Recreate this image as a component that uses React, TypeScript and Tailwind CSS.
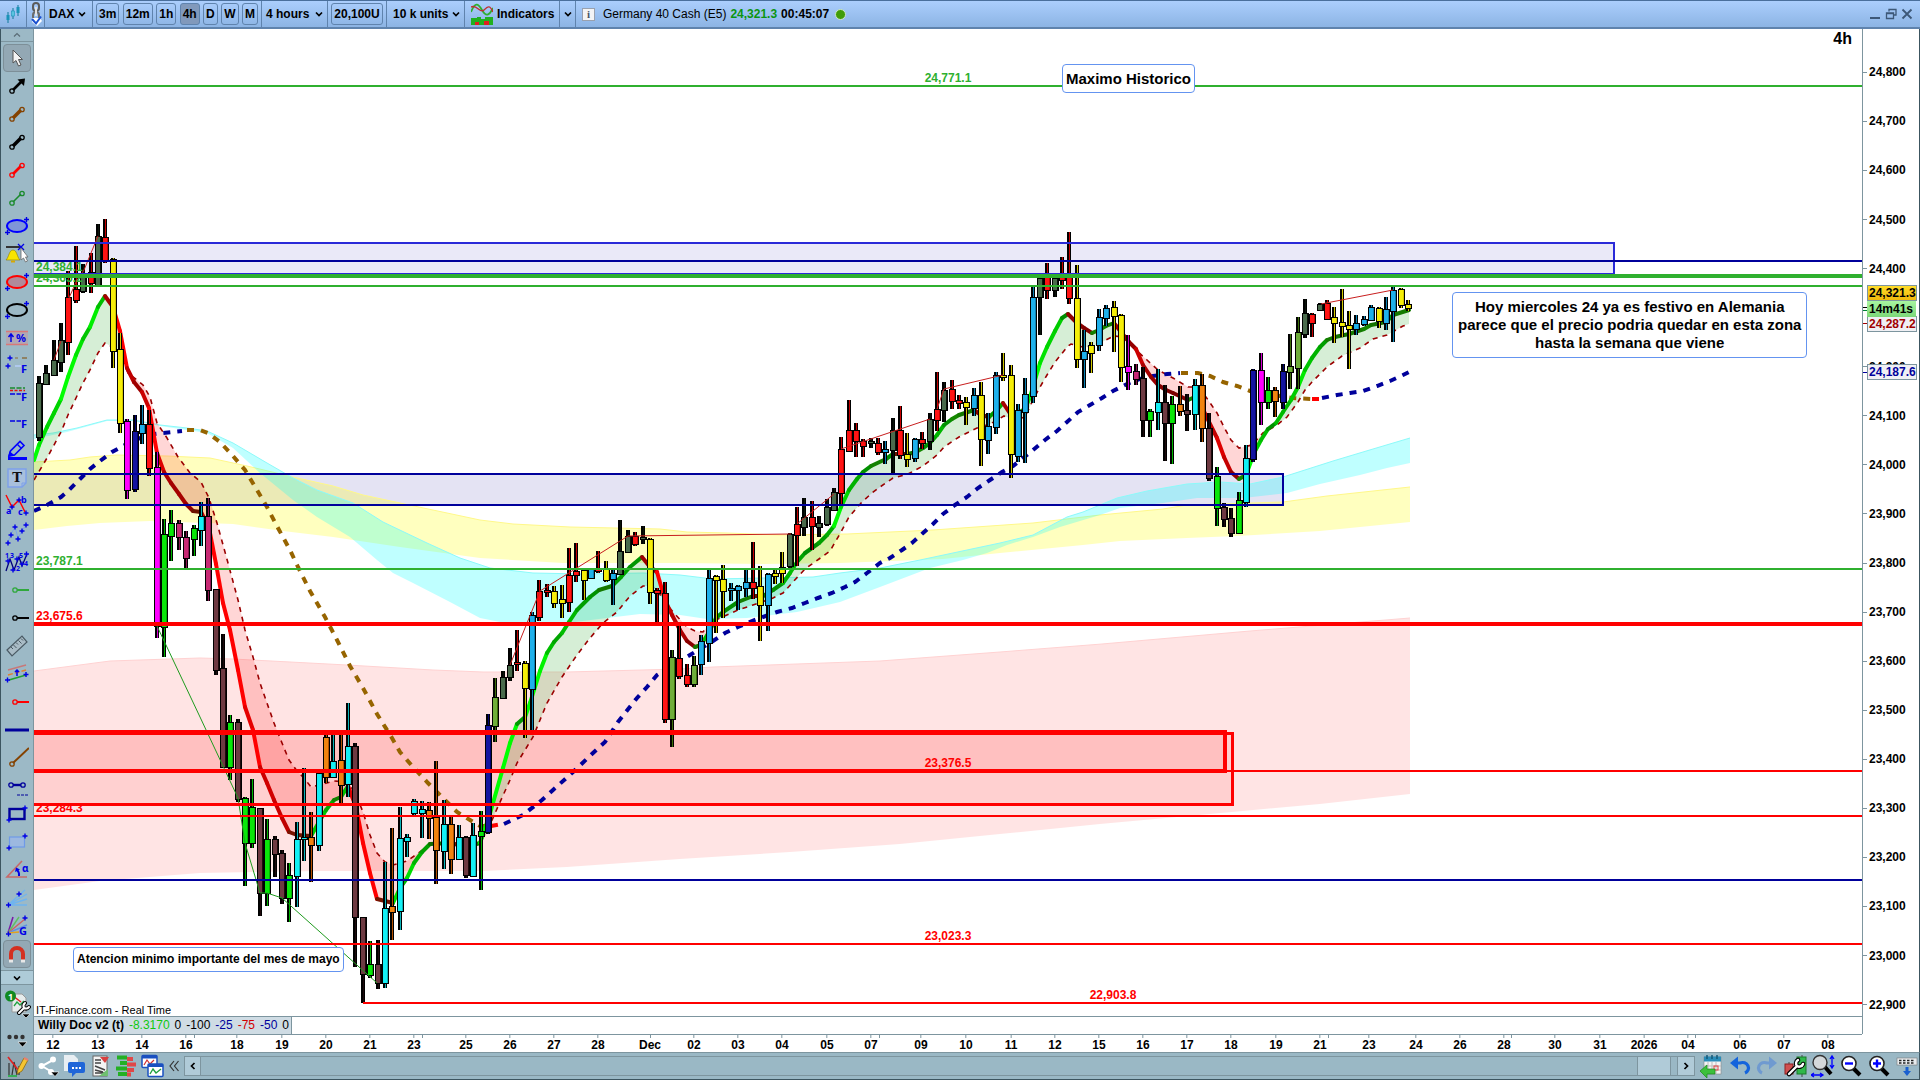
import React from "react";

type Pt = [number, number];

/* ---------- plot coordinate space ---------- */
const X0 = 34;
const Y0 = 29;
const PW = 1828;
const PH = 987;
const VIEW = "34 29 1828 987";
const px = (x: number) => `${((x - X0) / PW) * 100}%`;
const py = (y: number) => `${((y - Y0) / PH) * 100}%`;

/* ---------- candles: high, body top, body bottom, low, colour key ---------- */
const CANDLES =
  "376,383,437,441,g 365,373,384,384,g 340,360,375,376,g 323,340,362,372,g 271,297,342,355,r 246,289,300,303,r 264,274,291,293,g 253,272,283,293,r 224,236,285,285,g 219,237,260,263,r " +
  "258,259,351,368,y 333,349,423,433,y 419,421,490,499,m 415,431,489,492,n 405,424,433,444,b 410,424,468,476,r 452,467,626,638,m 519,534,627,657,l 510,523,536,561,l 520,523,537,550,k " +
  "531,537,558,568,k 525,528,539,556,l 502,516,530,546,c 498,516,590,601,k 589,589,670,675,w 634,668,767,768,w 715,722,767,780,l 719,722,799,802,w 797,798,843,886,l 779,807,843,848,l " +
  "808,808,893,916,w 819,839,893,906,l 836,839,854,877,w 850,853,898,904,w 863,875,898,922,l 822,839,876,907,c 768,837,839,861,c 812,837,845,882,o 773,773,845,851,c 735,737,777,783,o " +
  "735,761,777,778,c 735,760,785,803,o 703,746,784,797,c 743,746,917,967,w 917,917,974,1003,w 941,964,975,978,l 940,964,983,989,w 862,908,983,988,c 828,906,912,940,o 807,838,911,930,c " +
  "834,837,841,857,c 799,801,813,815,c 801,809,813,838,c 802,810,818,839,o 761,817,850,884,o 800,824,851,869,c 817,824,859,874,o 825,837,859,859,c 836,837,875,878,w 823,835,876,876,c " +
  "811,831,836,890,l 714,725,832,834,n 678,697,726,742,v 671,677,698,698,g 648,665,677,681,g 630,662,664,671,r 661,663,688,738,y 612,615,689,735,b 580,591,617,621,r 584,590,592,597,r " +
  "586,591,603,608,y 585,599,603,618,y 548,575,602,612,r 543,571,575,582,r 569,570,580,600,y 568,569,578,579,b 551,568,571,573,r 561,569,580,582,y 570,573,579,605,b 520,551,574,575,g " +
  "530,536,552,553,g 532,536,544,546,r 526,537,539,544,g 538,539,592,604,y 588,590,593,623,r 582,593,719,723,r 650,657,719,747,v 625,658,676,679,r 664,675,684,687,r 656,665,684,687,v " +
  "635,641,664,675,b 569,578,643,662,b 575,576,580,633,y 565,579,591,618,y 583,588,590,601,b 585,586,590,610,b 569,582,588,597,b 542,582,588,599,r 566,586,605,641,y 573,574,605,631,b " +
  "569,573,576,584,y 552,567,573,583,y 533,534,566,568,g 507,524,535,566,r 498,517,527,536,g 501,517,526,550,r 516,523,527,537,g 499,507,524,526,g 488,492,510,510,g 437,449,493,504,r " +
  "400,430,451,452,r 423,430,441,457,r 439,441,446,457,r 438,441,443,448,g 438,443,452,455,r 441,449,452,464,b 418,430,450,473,g 406,430,455,459,r 433,454,459,467,y 438,439,458,462,b " +
  "432,439,443,449,r 413,419,441,450,g 372,409,420,431,r 382,390,410,422,g 380,389,401,409,r 395,400,403,409,r 397,402,407,425,y 388,395,408,416,b 382,395,439,466,y 413,426,440,454,b " +
  "372,375,427,434,b 353,375,377,381,y 365,375,454,478,y 404,410,456,462,b 378,394,412,463,b 287,297,396,403,b 277,278,297,335,g 263,277,290,299,r 277,278,290,297,g 257,277,280,289,r " +
  "232,277,298,304,r 265,298,359,368,y 330,351,359,388,b 342,345,353,373,y 309,317,345,351,b 305,308,318,326,b 301,307,316,352,y 314,315,367,382,y 335,366,372,390,m 364,371,379,385,k " +
  "367,378,420,437,w 409,411,420,437,l 369,402,412,430,c 385,402,423,461,w 396,404,423,464,l 386,404,411,416,o 394,410,414,431,w 379,385,414,430,c 374,385,428,442,o 413,428,478,481,w " +
  "467,476,508,526,l 503,507,519,527,w 508,518,533,537,w 492,500,533,534,l 445,458,502,507,c 369,370,459,462,n 353,370,402,425,m 377,390,402,409,l 387,390,401,417,o 364,371,402,409,n " +
  "334,366,372,389,v 317,332,368,389,v 299,313,334,338,g 313,314,323,337,r 303,304,310,311,g 300,303,319,320,r 307,317,323,343,y 289,322,326,337,y 311,325,329,369,y 315,323,329,335,b " +
  "316,319,324,326,b 305,307,320,321,b 307,308,321,328,y 297,309,323,330,b 287,290,311,342,b 288,289,305,308,y 300,304,308,311,y";

const BODY: Record<string, string> = {
  g: "#4a6b4c", r: "#ff1414", y: "#f5ee0a", m: "#ff00ff", n: "#1414a0", b: "#1fb0ea", l: "#0ae60a",
  k: "#c82a74", c: "#14f0f5", w: "#6e3a42", o: "#f08410", v: "#6fae3a",
};
const WICK: Record<string, string> = {
  g: "#0a140a", r: "#c80000", y: "#d2c800", m: "#d200d2", n: "#00006e", b: "#0a82b4", l: "#00b400",
  k: "#8c1450", c: "#0ab4b9", w: "#1e0a0c", o: "#b45000", v: "#3c6e0a",
};

/* ---------- averages and bands ---------- */
const pts = (s: string): Pt[] => s.trim().split(/\s+/).map((p) => p.split(",").map(Number) as Pt);

const FAST = pts(
  "34,460 39,445 47,427 54,413 61,399 68,377 76,355 83,339 90,327 98,307 105,296 113,307 120,331 127,368 134,382 142,392 149,408 157,453 164,472 171,483 179,494 186,504 193,511 201,512 209,528 216,564 223,603 230,630 238,670 245,707 253,730 260,767 267,783 274,800 282,818 289,832 297,835 311,836 319,822 326,810 334,800 341,797 348,786 356,807 363,843 370,873 377,899 393,903 400,888 407,878 414,863 422,852 430,844 451,843 466,847 480,843 489,817 503,768 510,743 517,724 525,717 530,703 540,671 547,653 554,642 562,633 569,622 577,610 590,597 599,590 612,586 621,577 630,567 642,557 650,567 657,572 665,600 672,615 680,630 687,641 695,647 701,645 709,632 716,618 723,612 738,602 753,596 763,596 773,590 783,583 790,573 797,562 805,553 819,543 827,535 834,526 841,507 849,490 857,479 863,472 871,466 886,459 893,454 908,454 916,452 923,448 930,443 937,435 944,425 952,419 959,415 974,410 981,415 989,417 997,410 1003,403 1011,415 1018,413 1025,409 1030,397 1040,363 1047,347 1055,331 1062,318 1068,314 1077,323 1084,328 1092,333 1099,330 1106,326 1114,323 1121,332 1129,342 1136,349 1143,365 1151,377 1158,385 1166,390 1173,393 1188,400 1195,397 1202,407 1209,422 1217,438 1224,457 1231,472 1239,479 1246,475 1254,453 1261,440 1268,429 1276,423 1283,412 1291,400 1298,387 1305,370 1312,358 1320,347 1327,340 1335,337 1349,334 1364,329 1371,325 1386,322 1393,315 1409,310"
);
const SIGNAL = pts(
  "34,480 47,458 61,432 68,415 76,398 83,383 90,370 98,353 105,343 113,347 120,352 128,373 137,380 143,385 150,397 157,423 167,438 178,457 190,473 201,482 209,498 217,523 228,563 238,600 245,630 253,657 260,683 267,703 274,723 282,743 289,760 297,771 304,778 311,787 323,784 334,781 348,782 356,795 363,812 370,835 377,853 385,862 393,865 407,861 417,854 430,845 450,843 467,847 480,843 489,827 496,811 510,780 517,763 525,750 533,737 540,720 547,703 562,677 577,655 590,638 603,623 617,612 630,596 643,586 650,586 657,590 665,602 673,612 687,627 695,631 703,632 710,623 720,618 738,610 753,605 773,598 783,593 793,582 805,569 819,559 830,551 841,532 849,517 862,502 872,493 880,487 893,478 908,474 923,466 937,455 944,447 959,437 977,428 990,424 1004,416 1015,420 1025,417 1033,400 1040,387 1047,375 1055,362 1068,346 1071,344 1083,347 1093,346 1102,342 1114,336 1123,337 1136,350 1147,360 1158,370 1173,378 1188,387 1195,387 1206,397 1217,413 1224,427 1231,440 1239,448 1252,445 1263,433 1277,425 1287,417 1298,402 1305,390 1312,382 1327,367 1342,356 1360,348 1373,339 1387,335 1403,326 1409,324"
);
const SLOW: { color: string; p: Pt[] }[] = [
  { color: "#00009b", p: pts("34,511 47,505 61,497 68,491 80,479 90,469 100,461 112,452 123,446 138,439 147,435 163,433 182,431") },
  { color: "#966400", p: pts("187,430 200,430 208,433 220,442 233,456 245,470 257,490 267,507 278,528 290,550 298,567 310,591 325,617 337,640 350,666 363,688 377,714 392,738 400,752 413,767 428,783 443,798 457,812 470,820 480,826 488,826") },
  { color: "#ff0000", p: pts("491,826 502,824") },
  { color: "#00009b", p: pts("504,824 523,815 542,800 553,790 573,772 593,753 605,742 618,722 637,698 647,687 657,675 670,667 690,655 713,641 725,633 738,627 752,621 763,617 777,612 792,608 805,603 818,598 832,593 845,587 855,582 867,573 880,563 890,558 902,550 912,543 923,533 933,524 943,514 955,505 967,497 978,488 990,480 1002,472 1013,466 1023,458 1033,450 1045,440 1057,431 1067,422 1078,412 1090,405 1102,398 1113,391 1127,384 1140,379 1153,376 1167,374 1180,373") },
  { color: "#966400", p: pts("1181,373 1198,373 1210,376 1223,382 1237,386 1250,391 1267,394 1280,396 1292,398 1311,399") },
  { color: "#ff0000", p: pts("1312,399 1321,399") },
  { color: "#00009b", p: pts("1322,398 1337,395 1350,393 1363,391 1377,386 1390,381 1403,375 1409,372") },
];
const YELLOW_TOP = pts("34,462 70,460 90,457 117,455 167,456 210,458 247,466 293,477 333,486 363,495 400,503 480,520 513,524 570,527 660,529 687,532 727,533 780,535 847,534 933,530 1033,523 1100,515 1163,509 1187,505 1283,502 1327,496 1410,487");
const YELLOW_BOTTOM = pts("34,530 67,526 100,523 150,521 233,524 283,531 333,537 400,547 480,558 563,563 680,563 763,564 840,563 943,559 1000,553 1083,545 1120,541 1187,538 1237,536 1320,531 1410,522");
const CYAN_TOP = pts("34,435 53,433 77,428 107,420 133,420 160,425 187,428 207,431 233,443 267,463 293,478 317,490 353,503 383,522 427,543 460,558 490,568 533,573 583,574 643,573 680,575 713,579 763,578 813,577 840,573 880,568 920,560 967,550 1000,543 1033,535 1067,517 1083,512 1117,498 1147,491 1187,484 1220,482 1250,484 1283,477 1333,461 1373,449 1410,438");
const CYAN_BOTTOM = pts("34,439 67,432 107,421 133,421 160,426 207,433 233,448 260,473 293,500 317,517 350,537 377,560 393,573 413,583 450,602 480,618 500,622 567,623 607,618 640,614 680,615 707,619 747,618 797,612 840,602 880,587 930,568 963,560 987,553 1007,545 1033,537 1060,527 1100,515 1120,508 1163,503 1197,498 1243,498 1287,493 1320,484 1360,475 1387,468 1410,463");
const PINK_TOP = pts("34,671 110,661 200,658 233,659 347,665 433,670 483,672 567,672 680,669 713,667 880,661 1000,652 1102,644 1250,631 1410,618");
const PINK_BOTTOM = pts("34,890 100,881 200,873 320,871 483,871 567,867 680,859 790,852 900,844 1000,834 1100,824 1232,812 1320,804 1410,794");

const line = (p: Pt[]) => "M" + p.map((q) => q.join(",")).join("L");
const band = (a: Pt[], b: Pt[]) => line(a) + "L" + [...b].reverse().map((q) => q.join(",")).join("L") + "Z";

function yAt(p: Pt[], x: number) {
  for (let i = 1; i < p.length; i++) {
    if (x <= p[i][0]) {
      const [x1, y1] = p[i - 1];
      const [x2, y2] = p[i];
      return y1 + ((y2 - y1) * (x - x1)) / (x2 - x1);
    }
  }
  return p[p.length - 1][1];
}

function clouds() {
  const out: { up: boolean; a: Pt[]; b: Pt[] }[] = [];
  for (let x = 34; x <= 1409; x += 2.5) {
    const a = yAt(FAST, x);
    const b = yAt(SIGNAL, x);
    const up = a < b;
    let cur = out[out.length - 1];
    if (!cur || cur.up !== up) {
      cur = { up, a: [], b: [] };
      out.push(cur);
    }
    cur.a.push([x, a]);
    cur.b.push([x, b]);
  }
  return out.filter((c) => c.a.length > 1);
}

function slopeColor(s: number) {
  const k = Math.min(1, Math.abs(s) / (s < 0 ? 2.8 : 3.5));
  const v = Math.round(105 + 150 * k);
  if (s < 0) return `rgb(${Math.abs(s) < 0.6 ? 20 : 0},${v},0)`;
  return `rgb(${v},${Math.abs(s) < 0.4 ? 20 : 0},0)`;
}

const ZIGZAG_UP = [
  "54,360 61,341", "69,298 76,282 84,270 98,236", "510,665 540,591 628,536 791,534", "797,524 834,494",
  "841,449 930,419", "937,409 944,389 1003,375", "1321,304 1393,290",
];

function ChartBase() {
  return (
    <svg className="absolute inset-0 h-full w-full" viewBox={VIEW} preserveAspectRatio="none" aria-hidden="true">
      <rect x="33" y="243" width="1581" height="32" fill="#eae9f8" />
      <rect x="33" y="474" width="1250" height="31" fill="#e4e3f3" />
      <path d={band(PINK_TOP, PINK_BOTTOM)} fill="#ff0000" fillOpacity="0.105" />
      <path d={line(PINK_TOP)} stroke="#ffd2d2" fill="none" />
      <rect x="33" y="733" width="1199" height="72" fill="#ff0000" fillOpacity="0.085" />
      <rect x="33" y="733" width="1192" height="38" fill="#ff0000" fillOpacity="0.075" />
      <path d={band(YELLOW_TOP, YELLOW_BOTTOM)} fill="#ffff00" fillOpacity="0.25" />
      <path d={line(YELLOW_TOP)} stroke="#fff88a" fill="none" />
      <path d={band(CYAN_TOP, CYAN_BOTTOM)} fill="#00ffff" fillOpacity="0.25" />
      <path d={line(CYAN_TOP)} stroke="#8cfafa" fill="none" />
      {clouds().map((c, i) => (
        <path key={i} d={band(c.a, c.b)} fill={c.up ? "#32aa32" : "#ff3232"} fillOpacity="0.2" />
      ))}
      <path d={line(SIGNAL)} stroke="#9b0000" strokeWidth="1.6" strokeDasharray="5 5" fill="none" />
      {SLOW.map((s, i) => (
        <path key={i} d={line(s.p)} stroke={s.color} strokeWidth="4" strokeDasharray="7 7" fill="none" />
      ))}
      {FAST.slice(1).map((p, i) => {
        const q = FAST[i];
        return (
          <line key={i} x1={q[0]} y1={q[1]} x2={p[0]} y2={p[1]} stroke={slopeColor((p[1] - q[1]) / (p[0] - q[0]))} strokeWidth="4" strokeLinecap="round" />
        );
      })}
      <g shapeRendering="crispEdges">
        {CANDLES.split(" ").map((row, i) => {
          const f = row.split(",");
          const [h, t, b, l] = f.slice(0, 4).map(Number);
          const c = f[4];
          const x = Math.round(39 + i * 7.36);
          const bh = Math.max(3, b - t + 1);
          return (
            <g key={i}>
              <rect x={x - 2} y={h} width="4" height={l - h} fill="#000" />
              <rect x={x} y={h} width="1" height={l - h} fill={WICK[c]} />
              <rect x={x - 3} y={t} width="7" height={bh} fill="#000" />
              <rect x={x - 2} y={t + 1} width="5" height={bh - 2} fill={BODY[c]} />
              <rect x={x + 2} y={t + 1} width="1" height={bh - 2} fill={WICK[c]} />
            </g>
          );
        })}
      </g>
      {ZIGZAG_UP.map((z) => (
        <polyline key={z} points={z} stroke="#c81e1e" fill="none" />
      ))}
      <polyline points="157,626 200,717 238,798 245,843 260,893 267,893 282,898 377,983" stroke="#1e9b1e" fill="none" />
    </svg>
  );
}

const GREEN = "#2fb02f";
const NAVY = "#00009b";
const RED = "#ff0000";
const LEVELS: { y: number; h: number; c: string; x?: number }[] = [
  { y: 85, h: 2, c: GREEN }, { y: 260, h: 2, c: NAVY }, { y: 274, h: 4, c: GREEN }, { y: 285, h: 2, c: GREEN },
  { y: 568, h: 2, c: GREEN }, { y: 622, h: 4, c: RED }, { y: 770, h: 2, c: RED }, { y: 815, h: 2, c: RED },
  { y: 879, h: 2, c: NAVY }, { y: 943, h: 2, c: RED }, { y: 1002, h: 2, c: RED, x: 363 },
];

function ChartLevels() {
  return (
    <svg className="absolute inset-0 h-full w-full" viewBox={VIEW} preserveAspectRatio="none" aria-hidden="true" shapeRendering="crispEdges">
      <path d="M33 243H1614V274H33" stroke="#2a2ad8" strokeWidth="2" fill="none" />
      <path d="M33 474H1283V505H33" stroke={NAVY} strokeWidth="2" fill="none" />
      {LEVELS.map((l) => (
        <rect key={l.y} x={l.x ?? 34} y={l.y} width={1862 - (l.x ?? 34)} height={l.h} fill={l.c} />
      ))}
      <path d="M33 733H1232V804H33" stroke={RED} strokeWidth="3" fill="none" />
      <path d="M33 732H1225V771H33" stroke={RED} strokeWidth="4" fill="none" />
    </svg>
  );
}

const LEVEL_LABELS: { t: string; x: number; y: number; c: string; mid?: boolean }[] = [
  { t: "24,771.1", x: 948, y: 78, c: "text-[#2fb02f]", mid: true },
  { t: "24,384.1", x: 36, y: 267, c: "text-[#2fb02f]" },
  { t: "24,365.2", x: 36, y: 278, c: "text-[#2fb02f]" },
  { t: "23,787.1", x: 36, y: 561, c: "text-[#2fb02f]" },
  { t: "23,675.6", x: 36, y: 616, c: "text-[#ff0000]" },
  { t: "23,284.3", x: 36, y: 808, c: "text-[#ff0000]" },
  { t: "23,376.5", x: 948, y: 763, c: "text-[#ff0000]", mid: true },
  { t: "23,023.3", x: 948, y: 936, c: "text-[#ff0000]", mid: true },
  { t: "22,903.8", x: 1113, y: 995, c: "text-[#ff0000]", mid: true },
];

const PRICES = Array.from({ length: 20 }, (_, i) => 24800 - i * 100).filter((p) => p !== 24300);
const priceY = (p: number) => 72.3 + ((24800 - p) / 100) * 49.07;

const DATES: [string, number][] = [
  ["12", 53], ["13", 98], ["14", 142], ["16", 186], ["18", 237], ["19", 282], ["20", 326], ["21", 370], ["23", 414], ["25", 466],
  ["26", 510], ["27", 554], ["28", 598], ["Dec", 650], ["02", 694], ["03", 738], ["04", 782], ["05", 827], ["07", 871], ["09", 921],
  ["10", 966], ["11", 1011], ["12", 1055], ["15", 1099], ["16", 1143], ["17", 1187], ["18", 1231], ["19", 1276], ["21", 1320], ["23", 1369],
  ["24", 1416], ["26", 1460], ["28", 1504], ["30", 1555], ["31", 1600], ["2026", 1644], ["04", 1688], ["06", 1740], ["07", 1784], ["08", 1828],
];
const EXTRA_TICKS = [194, 422, 879, 1328, 1511, 1695];

/* ---------- icons ---------- */
function Svg({ children, w = 24, h = 24 }: { children: React.ReactNode; w?: number; h?: number }) {
  return (
    <svg width={w} height={h} viewBox={`0 0 ${w} ${h}`} fill="none" aria-hidden="true" className="shrink-0">
      {children}
    </svg>
  );
}
const Chevron = ({ className = "" }: { className?: string }) => (
  <svg width="8" height="6" viewBox="0 0 8 6" fill="none" aria-hidden="true" className={className}>
    <path d="M1 1.5L4 4.5L7 1.5" stroke="#000" strokeWidth="1.7" />
  </svg>
);
const Plus = ({ x, y }: { x: number; y: number }) => <path d={`M${x - 2.5} ${y}h5M${x} ${y - 2.5}v5`} stroke="#0000e6" strokeWidth="1.4" />;
const Segment = ({ c, w }: { c: string; w: number }) => (
  <Svg>
    <path d="M8 16L16 8" stroke={c} strokeWidth={w} />
    <circle cx="7" cy="17" r="2.2" stroke={c} strokeWidth="1.3" />
    <circle cx="17" cy="7.5" r="2.2" stroke={c} strokeWidth="1.3" />
  </Svg>
);
const Ray = ({ c }: { c: string }) => (
  <Svg>
    <circle cx="10" cy="12" r="2.2" stroke={c} strokeWidth="1.3" />
    <path d="M12 12H24" stroke={c} strokeWidth="2" />
  </Svg>
);
const Oval = ({ c, f }: { c: string; f: string }) => (
  <Svg>
    <ellipse cx="12" cy="12" rx="10" ry="6" stroke={c} strokeWidth="2" fill={f} />
    <Plus x={21.5} y={5.5} />
    <Plus x={2.5} y={18.5} />
  </Svg>
);
const tinyText = { fontFamily: '"Noto Sans", sans-serif', fontWeight: 700 } as const;

const TOOLS: { name: string; icon: React.ReactNode; active?: boolean }[] = [
  { name: "Pointer", active: true, icon: <Svg><path d="M8 4V17L11 14.5L13.5 20L16 19L13.5 13.5H17.5Z" fill="#f4f4f4" stroke="#555" /></Svg> },
  { name: "Arrow", icon: <Svg><path d="M8 16L17 7" stroke="#000" strokeWidth="2.6" /><path d="M12.5 5.5L20 4.5L19 12Z" fill="#000" /><circle cx="7" cy="17" r="2.2" stroke="#000" strokeWidth="1.3" /></Svg> },
  { name: "Brown segment", icon: <Segment c="#844200" w={3.6} /> },
  { name: "Black segment", icon: <Segment c="#000" w={3.6} /> },
  { name: "Red segment", icon: <Segment c="#ff0000" w={2.6} /> },
  { name: "Green segment", icon: <Segment c="#1a8a2c" w={1.6} /> },
  { name: "Blue ellipse", icon: <Oval c="#0000ff" f="#7f96d8" /> },
  { name: "Alert", icon: <Svg><path d="M1 5H15" stroke="#333" strokeWidth="2" /><path d="M1 18C4 15 4 8 8 8S12 15 15 18Z" fill="#f8e400" stroke="#8a7a00" strokeWidth=".6" /><path d="M6 18.5h4v2h-4z" fill="#d8a800" /><path d="M13 2L19 8M19 2L13 8" stroke="#0000e6" strokeWidth="1.3" /><path d="M16 6V18L18.5 16L20.5 20L22.5 19L20.5 15H23Z" fill="#fff" stroke="#666" strokeWidth=".8" /></Svg> },
  { name: "Red ellipse", icon: <Oval c="#ff0000" f="#b08a9a" /> },
  { name: "Black ellipse", icon: <Oval c="#000" f="none" /> },
  { name: "Percent move", icon: <Svg><rect x="1" y="6" width="22" height="12" fill="#b0a8b4" /><path d="M1 5.5H23M1 18.5H23" stroke="#d87878" strokeWidth="1.6" /><path d="M6 16V8.500M3.5 11L6 8L8.500 11" stroke="#0000e6" strokeWidth="1.5" /><text x="11" y="16" fontSize="11" fill="#0000e6" style={tinyText}>%</text></Svg> },
  { name: "Fibonacci time", icon: <Svg><Plus x={5} y={4} /><Plus x={3} y={12} /><path d="M10 4h3" stroke="#8a6a3a" /><path d="M17 4h5" stroke="#8a6a3a" strokeWidth="1.4" /><path d="M10 12h6" stroke="#b8d0ff" strokeWidth="1.4" /><text x="16" y="19" fontSize="11" fill="#0000e6" style={tinyText}>F</text></Svg> },
  { name: "Fibonacci levels", icon: <Svg><path d="M5 6H20" stroke="#1a8a2c" strokeDasharray="5 1.5" strokeWidth="1.4" /><path d="M5 8.5H20" stroke="#e01010" strokeDasharray="3 1.5" strokeWidth="1.4" /><path d="M5 12H16" stroke="#0000e6" strokeDasharray="5 1.5" strokeWidth="1.4" /><text x="16" y="19" fontSize="11" fill="#0000e6" style={tinyText}>F</text></Svg> },
  { name: "Fibonacci short", icon: <Svg><path d="M5 11H16" stroke="#0000e6" strokeDasharray="5 1.5" strokeWidth="1.4" /><text x="16" y="18" fontSize="11" fill="#0000e6" style={tinyText}>F</text></Svg> },
  { name: "Pencil", icon: <Svg><path d="M4 18L5.500 13L15 3.500L19 7.500L9.500 17Z" stroke="#0000ff" strokeWidth="1.6" /><path d="M4 18l1-3.500 3 2.500zM12.500 6.500l4 4" stroke="#0000ff" fill="#0000ff" strokeWidth="1.4" /><path d="M3 20.500H22" stroke="#0000ff" strokeWidth="3" /></Svg> },
  { name: "Text", icon: <Svg><path d="M3 3H21V17L17 21H3Z" fill="#a8c0dc" stroke="#7da0ea" strokeWidth="1.4" /><path d="M17 21V17H21" stroke="#7da0ea" /><text x="12" y="16" textAnchor="middle" fontSize="13" fill="#111" fontWeight="700" fontFamily="DejaVu Serif, serif">T</text></Svg> },
  { name: "ABC wave", icon: <Svg><path d="M1 1L7 13L14 6L20 18" stroke="#ff0000" strokeWidth="1.4" /><Plus x={7} y={13} /><Plus x={14} y={6} /><Plus x={21} y={19} /><text x="1" y="20" fontSize="9" fill="#0000e6" style={tinyText}>a</text><text x="16" y="9" fontSize="9" fill="#0000e6" style={tinyText}>b</text><text x="13" y="21" fontSize="9" fill="#0000e6" style={tinyText}>c</text></Svg> },
  { name: "Wave", icon: <Svg><path d="M3 20L6 12L10 5L13 16L17 9L21 3" stroke="#7aa4e8" /><Plus x={3} y={21} /><Plus x={6} y={13} /><Plus x={10} y={5} /><Plus x={13} y={17} /><Plus x={17} y={9} /><Plus x={21} y={3} /></Svg> },
  { name: "Elliott wave", icon: <Svg><path d="M1 21L5 9L9 20L14 7L17 16L22 4" stroke="#00007a" strokeWidth="1.3" /><Plus x={3} y={11} /><Plus x={8} y={20} /><Plus x={12} y={9} /><Plus x={17} y={14} /><Plus x={21.5} y={4} /><text x="0" y="8" fontSize="7" fill="#0000e6" style={tinyText}>1</text><text x="5" y="8" fontSize="7" fill="#0000e6" style={tinyText}>3</text><text x="14" y="8" fontSize="7" fill="#0000e6" style={tinyText}>5</text><text x="11" y="21" fontSize="7" fill="#0000e6" style={tinyText}>2</text><text x="19" y="16" fontSize="7" fill="#0000e6" style={tinyText}>4</text></Svg> },
  { name: "Green ray", icon: <Ray c="#2fa83c" /> },
  { name: "Black ray", icon: <Ray c="#000" /> },
  { name: "Ruler", icon: <Svg><path d="M2 16L17 2L22 8L7 22Z" fill="#a9bcc6" stroke="#4a5a64" strokeWidth="1.2" /><path d="M6 13l2 2M8.500 11l3 3M11 8.500l2 2M13.500 6.500l3 3M16 4.500l2 2" stroke="#4a5a64" /></Svg> },
  { name: "Channel", icon: <Svg><path d="M3 8L21 3" stroke="#c87878" strokeWidth="1.4" /><path d="M3 13L21 8" stroke="#e08030" strokeWidth="1.4" strokeDasharray="5 2" /><path d="M4 18L21 13" stroke="#1fa030" strokeWidth="1.6" /><path d="M12 14V8M10 10l2-2 2 2" stroke="#0000e6" strokeWidth="1.5" /><Plus x={2.5} y={18} /><Plus x={21} y={12.5} /></Svg> },
  { name: "Red ray", icon: <Ray c="#ff0000" /> },
  { name: "Horizontal line", icon: <Svg><path d="M0 12H24" stroke="#00009b" strokeWidth="3" /></Svg> },
  { name: "Brown ray", icon: <Svg><path d="M8 17L24 2" stroke="#844200" strokeWidth="2" /><circle cx="7" cy="18" r="2.2" stroke="#844200" strokeWidth="1.3" /></Svg> },
  { name: "Price segment", icon: <Svg><path d="M8 11H16" stroke="#00009b" strokeWidth="2.4" /><circle cx="6" cy="11" r="2.2" stroke="#00009b" strokeWidth="1.3" /><circle cx="18" cy="11" r="2.2" stroke="#00009b" strokeWidth="1.3" /><path d="M12 21H24" stroke="#00009b" strokeDasharray="3 1" /></Svg> },
  { name: "Rectangle", icon: <Svg><rect x="4.5" y="7" width="15" height="10" stroke="#00009b" strokeWidth="2.4" /><Plus x={20} y={6} /><Plus x={4} y={18} /></Svg> },
  { name: "Light rectangle", icon: <Svg><rect x="4.5" y="7" width="15" height="10" fill="#9cb8e0" stroke="#6f9ae8" strokeWidth="1.2" /><Plus x={20} y={6} /><Plus x={4} y={18} /></Svg> },
  { name: "Angle", icon: <Svg><path d="M17 3L2 19H22" stroke="#c86868" strokeWidth="1.6" /><path d="M14 18Q14.5 14 12 12" stroke="#0000e6" strokeWidth="2" /><path d="M10 14l1-4.500 4 2z" fill="#0000e6" /><text x="17" y="14" fontSize="10" fill="#0000e6" style={tinyText}>α</text></Svg> },
  { name: "Speed lines", icon: <Svg><path d="M3 19L20 4M3 19L22 8M3 19L22 13M3 19H22" stroke="#6fb4f0" strokeWidth="1.4" /><Plus x={14} y={8} /><Plus x={3.5} y={19} /></Svg> },
  { name: "Gann fan", icon: <Svg><path d="M3 19L8 3" stroke="#7a1aa8" strokeWidth="1.6" /><path d="M3 19L14 3" stroke="#60c060" strokeWidth="1.4" /><path d="M3 19L20 5" stroke="#d06060" strokeWidth="1.4" /><path d="M3 19L22 11" stroke="#6090e0" strokeWidth="1.4" /><path d="M3 19L14 18" stroke="#e0a020" strokeWidth="1.4" /><Plus x={20} y={4} /><Plus x={3.5} y={20} /><text x="14" y="21" fontSize="11" fill="#0000e6" style={tinyText}>G</text></Svg> },
  { name: "Magnet", active: true, icon: <Svg><path d="M6 19V12A6 6 0 0 1 18 12V19" stroke="#d43020" strokeWidth="4" /><path d="M4 17.5h4v3h-4zM16 17.5h4v3h-4z" fill="#e8e8e8" /></Svg> },
];

function Magnifier({ sign }: { sign: "minus" | "plus" }) {
  return (
    <Svg>
      <path d="M14 14L21 21" stroke="#000" strokeWidth="4" />
      <circle cx="10" cy="9.5" r="7" fill="#fff" stroke="#222" strokeWidth="1.6" />
      <path d={sign === "minus" ? "M6 9.5h8" : "M6 9.5h8M10 5.5v8"} stroke="#0000ff" strokeWidth="2.4" />
    </Svg>
  );
}

/* ---------- bars ---------- */
const PERIODS = ["3m", "12m", "1h", "4h", "D", "W", "M"];

function TopBar() {
  const sep = "border-r border-[#5f83ad]";
  return (
    <header className="flex h-[29px] shrink-0 items-stretch border-b-2 border-[#5f83ad] border-t border-t-[#4a6f9c] bg-gradient-to-b from-[#abcefd] to-[#8cb4e4] text-[12px] font-bold">
      <button aria-label="Chart style" className={`flex w-[27px] items-center justify-center ${sep}`}>
        <Svg w={16} h={22}><path d="M3 9v11M8 5v11M13 2v11" stroke="#0f7898" /><rect x="1.5" y="12" width="3" height="5" fill="#1a93b8" /><rect x="6.5" y="8" width="3" height="5" fill="#5cc4e0" stroke="#1a93b8" strokeWidth=".6" /><rect x="11.5" y="4" width="3" height="6" fill="#1a93b8" /></Svg>
      </button>
      <button aria-label="Linked" className={`flex w-[18px] items-center justify-center ${sep}`}>
        <Svg w={14} h={24}><rect x="4" y="1" width="6" height="8" rx="3" stroke="#5c5c5c" strokeWidth="2" /><rect x="4" y="10" width="6" height="8" rx="3" stroke="#6c6c6c" strokeWidth="2" /><path d="M7 5v9" stroke="#e4e4e4" strokeWidth="2" /><path d="M3 16h8l2 3-5 5-5-4z" fill="#fff" /><path d="M3 17l4 4.500L12 14.500" stroke="#1a50d0" strokeWidth="2" /></Svg>
      </button>
      <button className={`flex w-[48px] items-center justify-between pl-1 pr-1.5 ${sep}`}>DAX<Chevron /></button>
      <div className={`flex w-[169px] items-center justify-between px-[3px] ${sep}`}>
        {PERIODS.map((p) => (
          <button key={p} className={p === "4h" ? "h-[22px] rounded-[3px] border border-[#5f83ad] bg-[#8199bb] px-0.5" : "h-[22px] rounded-[3px] border border-[#5f83ad] px-0.5"}>{p}</button>
        ))}
      </div>
      <button className={`flex w-[66px] items-center justify-between whitespace-nowrap pl-1 pr-1 ${sep}`}>4 hours<Chevron /></button>
      <div className={`flex w-[59px] items-center justify-center ${sep}`}>
        <button className="h-[22px] rounded-[3px] border border-[#5f83ad] px-0.5">20,100U</button>
      </div>
      <button className={`flex w-[78px] items-center justify-between whitespace-nowrap pl-1.5 pr-1 ${sep}`}>10 k units<Chevron /></button>
      <button className={`flex w-[95px] items-center gap-1 pl-1.5 ${sep}`}>
        <Svg w={22} h={24}><path d="M0 10C4 0 7 1 11 8S18 14 22 6" stroke="#2fb02f" strokeWidth="1.8" /><path d="M0 5C6 2 9 12 13 8S19 3 22 10" stroke="#c03030" strokeWidth="1.4" /><path d="M0 16h6v-1h4v2h4v-2h8v8H0z" fill="#20b020" /><path d="M4 20h4v3H4zM13 19h5v4h-5z" fill="#e02020" /></Svg>
        Indicators
      </button>
      <button aria-label="Indicator menu" className={`flex w-4 items-center justify-center ${sep}`}><Chevron /></button>
      <div className="flex items-center pl-1.5">
        <button aria-label="Information" className="flex h-[13px] w-[13px] items-center justify-center border border-gray-400 bg-gray-100 font-['Liberation_Serif',serif] text-[11px] leading-none text-gray-600">i</button>
        <h1 className="pl-2 text-[12px] font-normal">Germany 40 Cash (E5)</h1>
        <span className="pl-1 text-[#0b9510]">24,321.3</span>
        <span className="pl-1">00:45:07</span>
        <span className="ml-1.5 h-[11px] w-[11px] rounded-full border border-[#cfe8c8] bg-[#409c08]" />
      </div>
      <div className="ml-auto flex items-center gap-1 pr-[7px]">
        <button aria-label="Minimize"><Svg w={12} h={12}><path d="M1 10h10" stroke="#3d5878" strokeWidth="2" /></Svg></button>
        <button aria-label="Restore"><Svg w={12} h={12}><path d="M4 3.5V1.5H11V7H9M1.5 5h7v5.5h-7zM1.5 5.5h7" stroke="#3d5878" strokeWidth="1.3" /></Svg></button>
        <button aria-label="Close"><Svg w={12} h={12}><path d="M1.5 1.5l9 9M10.5 1.5l-9 9" stroke="#3d5878" strokeWidth="1.8" /></Svg></button>
      </div>
    </header>
  );
}

function SideBar() {
  return (
    <aside className="flex w-[34px] shrink-0 flex-col border-l border-r border-l-[#3c5560] border-r-[#7d959f] bg-[#9cb9c6]">
      <button aria-label="Scroll up" className="mb-[2px] flex h-[13px] items-center justify-center border-b border-[#7d959f]">
        <svg width="8" height="6" viewBox="0 0 8 6" fill="none" aria-hidden="true"><path d="M1 4.5L4 1.5L7 4.5" stroke="#5a6c76" strokeWidth="1.2" /></svg>
      </button>
      {TOOLS.map((t) => (
        <button key={t.name} aria-label={t.name} className={t.active ? "mx-[2px] flex h-7 items-center justify-center rounded-sm border border-[#7d8f98] bg-[#93a8b4]" : "mx-[2px] flex h-7 items-center justify-center"}>
          {t.icon}
        </button>
      ))}
      <button aria-label="Scroll down" className="mt-[2px] flex h-[15px] items-center justify-center border-y border-[#7d959f] bg-[#aecbd8]"><Chevron /></button>
      <div className="flex flex-1 flex-col items-center justify-between pb-1 pt-1">
        <button aria-label="Chart settings">
          <Svg w={28} h={30}><path d="M9 5h10l4 4v14H9z" fill="#e6ecec" stroke="#999" /><path d="M11 17l3-4 3 3 4-4" stroke="#20a040" strokeWidth="1.3" /><path d="M10 7l8 6" stroke="#e02020" strokeWidth="1.5" /><path d="M16 24l5-5M21 19a4 4 0 0 1 1-5M21 19a4 4 0 0 0 5-1" stroke="#000" strokeWidth="4" strokeLinecap="round" /><path d="M16 24l5-5M21 19a4 4 0 0 1 1-5M21 19a4 4 0 0 0 5-1" stroke="#fff" strokeWidth="2" strokeLinecap="round" /><circle cx="7.5" cy="7" r="5.5" fill="#108a20" /><text x="7.5" y="10.5" textAnchor="middle" fontSize="9" fill="#fff" style={tinyText}>1</text><path d="M19 25h8l-4 4z" fill="#000" stroke="#fff" strokeWidth=".6" /></Svg>
        </button>
        <button aria-label="More tools">
          <Svg w={28} h={16}><circle cx="6.5" cy="5" r="2.2" fill="#333" /><circle cx="13" cy="5" r="2.2" fill="#333" /><circle cx="19.5" cy="5" r="2.2" fill="#333" /><path d="M15 10h9l-4.500 5z" fill="#000" stroke="#fff" strokeWidth=".6" /></Svg>
        </button>
      </div>
    </aside>
  );
}

function BottomBar() {
  return (
    <footer className="flex h-7 shrink-0 items-center border-x border-b border-t border-x-[#3c5560] border-b-[#3c5560] border-t-[#7d959f] bg-[#9ab8c5]">
      <button aria-label="Drawing tools" className="flex h-full w-[33px] items-center justify-center border-r border-[#7d959f] bg-[#8fa6b1]">
        <Svg><path d="M4 21V9M7 21l2-13M12 21L9 8M14 21V12" stroke="#333" strokeWidth="1.2" /><path d="M3 3l11 14" stroke="#e02020" strokeWidth="1.6" /><path d="M3 22h9" stroke="#20b040" strokeWidth="1.6" /><path d="M12 20l1-5 6-11 4 2-6 11z" fill="#f4c430" stroke="#8a6a10" strokeWidth=".8" /><path d="M19 4l4 2" stroke="#e88070" strokeWidth="2" /></Svg>
      </button>
      <div className="flex items-center gap-0.5 pl-0.5">
        <button aria-label="Share"><Svg><path d="M17 6L6 12L16 18" stroke="#fff" strokeWidth="2" /><circle cx="17" cy="5.5" r="3" fill="#fff" /><circle cx="5.5" cy="12" r="3" fill="#fff" /><circle cx="15" cy="18" r="3" fill="#fff" /><path d="M15 18h8l-4 4.500z" fill="#000" stroke="#fff" strokeWidth=".6" /></Svg></button>
        <button aria-label="Messages"><Svg><path d="M2 1h10l4 4v12H2z" fill="#e8eef2" /><path d="M8 8h13a2 2 0 0 1 2 2v7a2 2 0 0 1-2 2h-7l-4 4v-4H8a2 2 0 0 1-2-2v-7a2 2 0 0 1 2-2z" fill="#1f66d8" /><path d="M10 14h2m1.500 0h2m1.500 0h2" stroke="#fff" strokeWidth="2" /></Svg></button>
        <button aria-label="Order list"><Svg><rect x="5" y="2" width="14" height="20" fill="#f4f4f4" stroke="#666" /><path d="M7 6h6M7 9h6M7 12l10 4M7 16l8 2M7 19h10" stroke="#444" strokeWidth="1.5" /><path d="M12 3h9l-4 6z" fill="#d84040" /><path d="M20 15v7h-9z" fill="#6fc070" /></Svg></button>
        <button aria-label="Order book"><Svg><path d="M3 3.500h10M6 9h7M2 14.500h11M4 20h9" stroke="#24b024" strokeWidth="4.2" /><path d="M13 5h6M13 10.500h9M13 16h7M13 20.500h4" stroke="#e04848" strokeWidth="4.2" /></Svg></button>
        <button aria-label="Windows"><Svg><rect x="2" y="1.5" width="15" height="12" rx="1" fill="#fff" stroke="#1a50c0" strokeWidth="1.5" /><path d="M2 3h15" stroke="#1a50c0" strokeWidth="3" /><path d="M4 11l3-5 3 4 4-4" stroke="#d03030" strokeWidth="1.2" /><rect x="8" y="10" width="15" height="12.5" rx="1" fill="#fff" stroke="#1a50c0" strokeWidth="1.5" /><path d="M8 11.5h15" stroke="#1a50c0" strokeWidth="3" /><path d="M10 20l3-5 3 4 5-4" stroke="#20a040" strokeWidth="1.4" /></Svg></button>
      </div>
      <button aria-label="Collapse" className="px-[5px]"><Svg w={10} h={12}><path d="M5 1L1 6L5 11M9.5 1L5.5 6L9.5 11" stroke="#333" strokeWidth="1.2" /></Svg></button>
      <div className="flex h-[20px] flex-1 items-stretch border border-[#7d959f]">
        <button aria-label="Scroll left" className="flex w-4 items-center justify-center border-r border-[#7d959f] bg-[#b0cbd8]"><Svg w={6} h={8}><path d="M4.5 1L1.5 4L4.5 7" stroke="#000" strokeWidth="1.7" /></Svg></button>
        <div className="flex flex-1 justify-end pr-1.5"><div className="w-[34px] border-x border-[#7d959f] bg-[#b0cbd8]" /></div>
        <button aria-label="Scroll right" className="flex w-[17px] items-center justify-center border-l border-[#7d959f] bg-[#b0cbd8]"><Svg w={6} h={8}><path d="M1.5 1L4.5 4L1.5 7" stroke="#000" strokeWidth="1.7" /></Svg></button>
      </div>
      <div className="flex items-center gap-1 pl-1">
        <button aria-label="Go to date"><Svg><rect x="5" y="3" width="17" height="17" fill="#f4f4f4" stroke="#888" strokeWidth=".6" /><path d="M5 2.500h17v5H5z" fill="#2a8cb8" /><path d="M8 1v4M13 1v4M18 1v4" stroke="#145878" strokeWidth="1.5" /><path d="M9 8v12M13 8v12M17 8v12M5 12h17M5 16h17" stroke="#bbb" /><rect x="15" y="12" width="4" height="4" stroke="#e04040" /><path d="M1 17l7-6v4h8v5H8v4z" fill="#3cc03c" stroke="#1a8a1a" strokeWidth=".7" /></Svg></button>
        <button aria-label="Undo"><Svg><path d="M8 9h5a6 5.500 0 0 1 5 10" stroke="#1464dc" strokeWidth="3.2" /><path d="M3 9l8-6.500v13z" fill="#1464dc" /></Svg></button>
        <button aria-label="Redo"><Svg><path d="M17 9h-5a6 5.500 0 0 0-5 10" stroke="#6f9ad0" strokeWidth="3.2" /><path d="M22 9l-8-6.500v13z" fill="#6f9ad0" /></Svg></button>
        <button aria-label="Chart setup"><Svg><path d="M6 8v14M19 1v22" stroke="#444" /><rect x="2" y="10" width="8" height="10" fill="#d05050" stroke="#902020" /><rect x="14" y="3" width="9" height="17" fill="#2fb84a" stroke="#1a7a2a" /><path d="M6 20l8-8M14 12a4 4 0 0 1 1-6M14 12a4 4 0 0 0 6-2" stroke="#000" strokeWidth="4.6" strokeLinecap="round" /><path d="M6 20l8-8M14 12a4 4 0 0 1 1-6M14 12a4 4 0 0 0 6-2" stroke="#fff" strokeWidth="2.4" strokeLinecap="round" /></Svg></button>
        <button aria-label="Zoom to fit"><Svg><path d="M14 13L20 20" stroke="#000" strokeWidth="4" /><circle cx="9" cy="8.5" r="7" fill="#d4d8da" stroke="#333" strokeWidth="1.4" /><path d="M21 3v10M19 5l2-3 2 3M19 11l2 3 2-3M1 21h10M3 19l-3 2 3 2M9 19l3 2-3 2" stroke="#0000ff" strokeWidth="1.3" /></Svg></button>
        <button aria-label="Zoom out"><Magnifier sign="minus" /></button>
        <button aria-label="Zoom in"><Magnifier sign="plus" /></button>
        <button aria-label="Keyboard"><Svg><rect x="2" y="4" width="20" height="7" fill="#e8ecee" stroke="#777" strokeWidth=".6" /><path d="M4 6.5h16M4 9h16" stroke="#222" strokeWidth="1.6" strokeDasharray="2.5 1.5" /><path d="M12 13v5" stroke="#1a60d0" strokeWidth="3" /><path d="M8 17h8l-4 5z" fill="#1a60d0" /></Svg></button>
      </div>
    </footer>
  );
}

const NOTE = "absolute rounded-[4px] border border-[#6494f0] bg-white text-center font-bold whitespace-nowrap";
const TAG = "absolute left-[4px] right-[2px] h-[16px] border border-[#7d959f] pl-px leading-[14px]";

export default function App() {
  return (
    <div className="flex h-screen min-h-[600px] flex-col overflow-hidden bg-white font-['Liberation_Sans',Arial,sans-serif] text-[12px] leading-[14px] text-black">
      <TopBar />
      <div className="flex min-h-0 flex-1">
        <SideBar />
        <main className="flex min-w-0 flex-1 flex-col border-r border-[#3c5560]">
          <div className="flex min-h-0 flex-1">
            <section aria-label="DAX 4h chart" className="relative min-w-0 flex-1 overflow-hidden">
              <ChartBase />
              {LEVEL_LABELS.map((l) => (
                <span key={l.t} style={{ left: px(l.x), top: py(l.y) }} className={`absolute -translate-y-1/2 font-bold ${l.c} ${l.mid ? "-translate-x-1/2" : ""}`}>{l.t}</span>
              ))}
              <ChartLevels />
              <div style={{ left: px(1062), top: py(64) }} className={`${NOTE} px-[3px] py-1 text-[15px] leading-[19px]`}>Maximo Historico</div>
              <div style={{ left: px(1452), top: py(292) }} className={`${NOTE} px-[5px] py-[5px] text-[15px] leading-[18px]`}>
                Hoy miercoles 24 ya es festivo en Alemania<br />parece que el precio podria quedar en esta zona<br />hasta la semana que viene
              </div>
              <div style={{ left: px(73), top: py(947) }} className={`${NOTE} px-[3px] py-[3px] text-[12px] leading-[17px]`}>Atencion minimo importante del mes de mayo</div>
              <strong className="absolute right-[10px] top-[1px] text-[16px] leading-[18px]">4h</strong>
              <span className="absolute bottom-0 left-[2px] text-[11px] leading-[11px]">IT-Finance.com - Real Time</span>
            </section>
            <div className="relative w-[57px] shrink-0 border-l border-[#7d959f] font-bold">
              {PRICES.map((p) => (
                <div key={p} style={{ top: py(priceY(p)) }} className="absolute left-0 flex -translate-y-1/2 items-center gap-[2px]">
                  <span className="h-px w-[4px] bg-[#7d959f]" />
                  {p.toLocaleString("en-US")}
                </div>
              ))}
              <span style={{ top: py(307) }} className="absolute left-0 h-px w-[4px] bg-black" />
              <span style={{ top: py(310) }} className="absolute left-0 h-px w-[4px] bg-green-700" />
              <span style={{ top: py(323) }} className="absolute left-0 h-px w-[4px] bg-[#a00000]" />
              <span style={{ top: py(372) }} className="absolute left-0 h-px w-[4px] bg-[#00009b]" />
              <div style={{ top: py(316) }} className={`${TAG} bg-[#f0f0f4] text-[#a00000]`}>24,287.2</div>
              <div style={{ top: py(285) }} className={`${TAG} bg-gradient-to-b from-[#ffdc28] to-[#f0b90a]`}>24,321.3</div>
              <div style={{ top: py(301) }} className="absolute left-[4px] right-[3px] h-[16px] bg-gradient-to-b from-[#a8f5a0] to-[#7cd878] pl-[2px] leading-[16px]">14m41s</div>
              <div style={{ top: py(364) }} className={`${TAG} bg-[#f0f0f4] text-[#00009b]`}>24,187.6</div>
            </div>
          </div>
          <div className="flex h-[18px] shrink-0">
            <div className="flex flex-1 border-t border-[#7d959f]">
              <div className="flex gap-[5px] whitespace-nowrap border-r border-[#7d959f] bg-[#cfdce4] pl-1 pr-0.5 leading-[17px]">
                <strong>Willy Doc v2 (t)</strong>
                <span className="text-[#0fc80f]">-8.3170</span>
                <span>0</span>
                <span>-100</span>
                <span className="text-[#00009b]">-25</span>
                <span className="text-[#d20000]">-75</span>
                <span className="text-[#00009b]">-50</span>
                <span>0</span>
              </div>
            </div>
            <div className="w-[57px] border-l border-[#7d959f]" />
          </div>
          <div className="flex h-[18px] shrink-0 font-bold">
            <div className="relative flex-1 border-t border-[#7d959f]">
              {DATES.map(([d, x]) => (
                <div key={x} style={{ left: px(x) }} className="absolute top-0 flex -translate-x-1/2 flex-col items-center">
                  <span className="h-[3px] w-px bg-[#7d959f]" />
                  <span className="leading-[14px]">{d}</span>
                </div>
              ))}
              {EXTRA_TICKS.map((x) => (
                <span key={x} style={{ left: px(x) }} className="absolute top-0 h-[3px] w-px bg-[#7d959f]" />
              ))}
            </div>
            <div className="w-[57px]" />
          </div>
        </main>
      </div>
      <BottomBar />
    </div>
  );
}
